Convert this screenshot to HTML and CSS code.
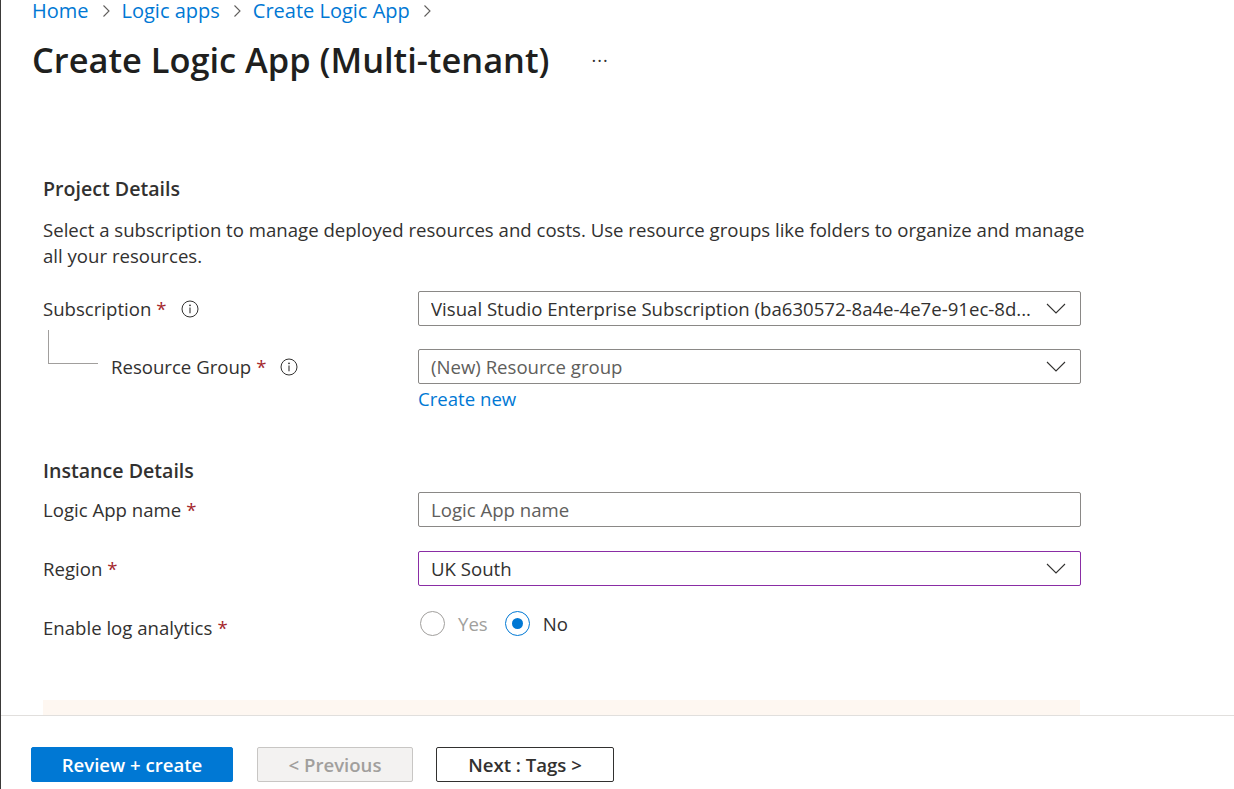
FILE: index.html
```html
<!DOCTYPE html>
<html lang="en">
<head>
<meta charset="utf-8">
<title>Create Logic App (Multi-tenant)</title>
<link rel="stylesheet" href="styles.css">
</head>
<body>
<div class="page">
  <div class="main">
    <nav class="breadcrumb">
      <a class="crumb">Home</a><span class="sep"><svg width="10" height="14" viewBox="0 0 10 14"><path d="M2.5 1.5 L8 7 L2.5 12.5" fill="none" stroke="#605e5c" stroke-width="1.1"/></svg></span>
      <a class="crumb">Logic apps</a><span class="sep"><svg width="10" height="14" viewBox="0 0 10 14"><path d="M2.5 1.5 L8 7 L2.5 12.5" fill="none" stroke="#605e5c" stroke-width="1.1"/></svg></span>
      <a class="crumb">Create Logic App</a><span class="sep"><svg width="10" height="14" viewBox="0 0 10 14"><path d="M2.5 1.5 L8 7 L2.5 12.5" fill="none" stroke="#605e5c" stroke-width="1.1"/></svg></span>
    </nav>
    <div class="title-row">
      <h1 class="title">Create Logic App (Multi-tenant)</h1>
      <span class="more">···</span>
    </div>

    <div class="form">
      <h2 class="section">Project Details</h2>
      <p class="desc">Select a subscription to manage deployed resources and costs. Use resource groups like folders to organize and manage all your resources.</p>

      <div class="row row-sub">
        <div class="label">Subscription<span class="req">*</span><span class="info"><svg width="18" height="18" viewBox="0 0 18 18"><circle cx="9" cy="9" r="8" fill="none" stroke="#323130" stroke-width="1"/><circle cx="9" cy="5.3" r="0.9" fill="#323130"/><path d="M9 7.6 V13.2" stroke="#323130" stroke-width="1.1"/></svg></span></div>
        <div class="select"><span class="value">Visual Studio Enterprise Subscription (ba630572-8a4e-4e7e-91ec-8d...</span><span class="chev"><svg width="20" height="11" viewBox="0 0 20 11"><path d="M1 1 L10 10 L19 1" fill="none" stroke="#323130" stroke-width="1.1"/></svg></span></div>
      </div>

      <div class="row row-rg">
        <div class="label label-rg">Resource Group<span class="req">*</span><span class="info"><svg width="18" height="18" viewBox="0 0 18 18"><circle cx="9" cy="9" r="8" fill="none" stroke="#323130" stroke-width="1"/><circle cx="9" cy="5.3" r="0.9" fill="#323130"/><path d="M9 7.6 V13.2" stroke="#323130" stroke-width="1.1"/></svg></span></div>
        <div class="control">
          <div class="select"><span class="value placeholder">(New) Resource group</span><span class="chev"><svg width="20" height="11" viewBox="0 0 20 11"><path d="M1 1 L10 10 L19 1" fill="none" stroke="#323130" stroke-width="1.1"/></svg></span></div>
          <a class="link">Create new</a>
        </div>
      </div>

      <h2 class="section section-inst">Instance Details</h2>

      <div class="row row-name">
        <div class="label">Logic App name<span class="req">*</span></div>
        <div class="input"><span class="value placeholder">Logic App name</span></div>
      </div>

      <div class="row row-region">
        <div class="label">Region<span class="req">*</span></div>
        <div class="select focused"><span class="value">UK South</span><span class="chev"><svg width="20" height="11" viewBox="0 0 20 11"><path d="M1 1 L10 10 L19 1" fill="none" stroke="#323130" stroke-width="1.1"/></svg></span></div>
      </div>

      <div class="row row-log">
        <div class="label label-log">Enable log analytics<span class="req">*</span></div>
        <div class="radios">
          <span class="radio"></span><span class="radio-text muted">Yes</span>
          <span class="radio checked"></span><span class="radio-text">No</span>
        </div>
      </div>

      <div class="notice"></div>
    </div>
  </div>
  <footer class="footer">
    <button class="btn primary">Review + create</button>
    <button class="btn disabled">&lt; Previous</button>
    <button class="btn outline">Next : Tags &gt;</button>
  </footer>
</div>
</body>
</html>
```
FILE: styles.css
```css
* { box-sizing: border-box; }
html, body { margin: 0; padding: 0; }
body {
  font-family: "Open Sans", "Noto Sans", sans-serif;
  color: #323130;
  background: #ffffff;
}
.page {
  width: 1234px;
  height: 789px;
  display: flex;
  flex-direction: column;
  border-left: 1px solid #3b3a39;
  overflow: hidden;
}
.main {
  height: 715px;
  overflow: hidden;
  padding-left: 31px;
  flex: none;
}
.breadcrumb {
  display: flex;
  align-items: center;
  height: 22px;
  font-size: 20px;
  line-height: 22px;
}
.crumb { color: #0078d4; }
.sep { display: inline-flex; margin: 0 11px 0 12px; }
.title-row {
  display: flex;
  align-items: center;
  margin-top: 18px;
  height: 40px;
}
.title {
  margin: 0;
  font-size: 34.4px;
  font-weight: 600;
  line-height: 40px;
  color: #201f1e;
}
.more {
  margin-left: 42px;
  font-size: 18px;
  color: #323130;
  letter-spacing: 1px;
}
.form {
  margin-left: 11px;
  width: 1037px;
  font-size: 18.6px;
}
.section {
  margin: 96px 0 0;
  font-size: 19.6px;
  font-weight: 600;
  line-height: 26px;
  color: #323130;
}
.section-inst { margin-top: 47px; }
.desc {
  margin: 15px -12px 0 0;
  line-height: 26px;
}
.row {
  display: grid;
  grid-template-columns: 375px 663px;
  align-items: start;
}
.row-sub { margin-top: 22px; }
.row-rg { margin-top: 23px; }
.row-name { margin-top: 8px; }
.row-region { margin-top: 24px; }
.row-log { margin-top: 22px; }
.label {
  display: flex;
  align-items: center;
  height: 35px;
  line-height: 26px;
}
.label-rg { padding-left: 68px; position: relative; }
.label-rg::before {
  content: "";
  position: absolute;
  left: 5px;
  top: -19px;
  width: 49px;
  height: 33px;
  border-left: 1px solid #a19f9d;
  border-bottom: 1px solid #a19f9d;
}
.label-log { height: 36px; padding-top: 4px; }
.req { color: #a4262c; margin-left: 5px; }
.info { display: inline-flex; margin-left: 14px; }
.select, .input {
  display: flex;
  align-items: center;
  justify-content: space-between;
  height: 35px;
  border: 1px solid #8a8886;
  border-radius: 2px;
  padding: 0 14px 0 12px;
}
.select.focused { border-color: #8a2da5; }
.value { white-space: nowrap; overflow: hidden; }
.placeholder { color: #605e5c; }
.chev { display: inline-flex; }
.control { display: flex; flex-direction: column; }
.link {
  color: #0078d4;
  margin-top: 3px;
  line-height: 24px;
}
.radios {
  display: flex;
  align-items: center;
  height: 36px;
  padding-left: 2px;
  margin-top: -3px;
}
.radio {
  width: 25px;
  height: 25px;
  border-radius: 50%;
  border: 1px solid #a19f9d;
  display: inline-flex;
  align-items: center;
  justify-content: center;
}
.radio.checked { border-color: #0078d4; }
.radio.checked::after {
  content: "";
  width: 11px;
  height: 11px;
  border-radius: 50%;
  background: #0078d4;
}
.radio-text { margin: 0 0 0 13px; }
.radio-text.muted { color: #a19f9d; margin-right: 17px; }
.notice {
  margin-top: 56px;
  height: 40px;
  background: #fef7f1;
}
.footer {
  flex: none;
  height: 74px;
  border-top: 1px solid #e1dfdd;
  display: flex;
  align-items: flex-start;
  padding: 31px 0 0 30px;
  gap: 24px;
}
.btn {
  height: 35px;
  font-family: inherit;
  font-size: 18.6px;
  font-weight: 600;
  border-radius: 2px;
  padding: 0;
}
.primary {
  width: 202px;
  background: #0078d4;
  border: 1px solid #0078d4;
  color: #ffffff;
}
.disabled {
  width: 156px;
  background: #f3f2f1;
  border: 1px solid #c8c6c4;
  color: #a19f9d;
}
.outline {
  width: 178px;
  margin-left: -1px;
  background: #ffffff;
  border: 1px solid #323130;
  color: #323130;
}
```
